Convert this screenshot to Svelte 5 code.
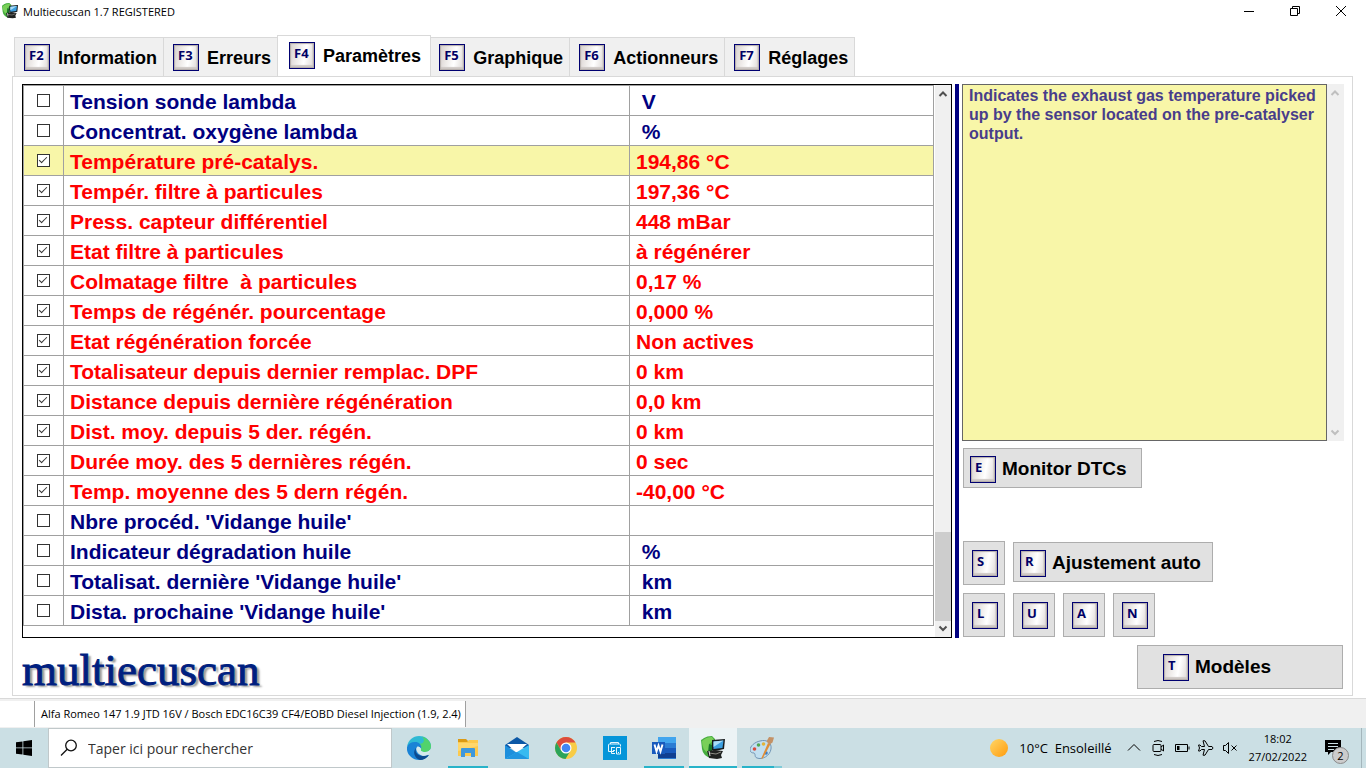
<script lang="ts">
	type Param = { name: string; value: string; checked: boolean };

	const tabs = [
		{ key: "F2", label: "Information" },
		{ key: "F3", label: "Erreurs" },
		{ key: "F4", label: "Paramètres" },
		{ key: "F5", label: "Graphique" },
		{ key: "F6", label: "Actionneurs" },
		{ key: "F7", label: "Réglages" },
	];

	let activeTab = $state("F4");
	let selected = $state(2);

	let params: Param[] = $state([
		{ name: "Tension sonde lambda", value: " V", checked: false },
		{ name: "Concentrat. oxygène lambda", value: " %", checked: false },
		{ name: "Température pré-catalys.", value: "194,86 °C", checked: true },
		{ name: "Tempér. filtre à particules", value: "197,36 °C", checked: true },
		{ name: "Press. capteur différentiel", value: "448 mBar", checked: true },
		{ name: "Etat filtre à particules", value: "à régénérer", checked: true },
		{ name: "Colmatage filtre  à particules", value: "0,17 %", checked: true },
		{ name: "Temps de régénér. pourcentage", value: "0,000 %", checked: true },
		{ name: "Etat régénération forcée", value: "Non actives", checked: true },
		{ name: "Totalisateur depuis dernier remplac. DPF", value: "0 km", checked: true },
		{ name: "Distance depuis dernière régénération", value: "0,0 km", checked: true },
		{ name: "Dist. moy. depuis 5 der. régén.", value: "0 km", checked: true },
		{ name: "Durée moy. des 5 dernières régén.", value: "0 sec", checked: true },
		{ name: "Temp. moyenne des 5 dern régén.", value: "-40,00 °C", checked: true },
		{ name: "Nbre procéd. 'Vidange huile'", value: "", checked: false },
		{ name: "Indicateur dégradation huile", value: " %", checked: false },
		{ name: "Totalisat. dernière 'Vidange huile'", value: " km", checked: false },
		{ name: "Dista. prochaine 'Vidange huile'", value: " km", checked: false },
	]);
</script>

{#snippet keycap(letter: string)}
	<span class="keycap">{letter}</span>
{/snippet}

{#snippet arrow(up: boolean)}
	<svg class="arrow" viewBox="0 0 16 16" width="16" height="16" aria-hidden="true">
		<path d={up ? "M4.5 11 8 7.5 11.5 11" : "M4.5 5.500 8 9 11.500 5.500"} />
	</svg>
{/snippet}

{#snippet appLogo(size: number)}
	<svg viewBox="0 0 24 24" width={size} height={size} aria-hidden="true">
		<path d="M0 4q2-1 3-2 3-2 8-2l3 3v6l-4 3v10q-8-2-9-9z" fill="#45ad3f" />
		<path d="M1 5q4-4 10-4l2 3-5 4-1 9Q1 14 1 5z" fill="#79cf58" />
		<path d="M8 8l3 1v12l-4-2z" fill="#187428" />
		<path d="M11 4l13-1-1 10-9 2-3-1z" fill="#15191c" />
		<path d="M12.500 5.500 22.500 4.500 21.500 12 12.500 13z" fill="#3c9fe0" />
		<path d="M12.500 5.500 22.500 4.500 12.500 11z" fill="#a9ddf7" />
		<path d="M6 15l7-1 9 1-2 4 1 3-5 1-8-1z" fill="#202221" />
		<path d="M8 17l7 1 5-2" stroke="#8d8d86" fill="none" />
		<path d="M8 15l1 5" stroke="#ddd" />
	</svg>
{/snippet}

<div class="window">
	<header class="titlebar">
		{@render appLogo(16)}
		<span class="title">Multiecuscan 1.7 REGISTERED</span>
		<div class="controls">
			<button aria-label="Réduire">
				<svg viewBox="0 0 12 12" width="12" height="12"><path d="M1 6.500h10" /></svg>
			</button>
			<button aria-label="Restaurer">
				<svg viewBox="0 0 12 12" width="12" height="12">
					<path d="M1.500 3.500h7v7h-7zM3.500 3.500v-2h7v7h-2" />
				</svg>
			</button>
			<button aria-label="Fermer">
				<svg viewBox="0 0 12 12" width="12" height="12"><path d="M1 1l10 10M11 1 1 11" /></svg>
			</button>
		</div>
	</header>

	<nav class="tabs" role="tablist">
		{#each tabs as tab}
			<button
				class="tab"
				class:active={tab.key === activeTab}
				role="tab"
				aria-selected={tab.key === activeTab}
				onclick={() => (activeTab = tab.key)}
			>
				{@render keycap(tab.key)}
				{tab.label}
			</button>
		{/each}
	</nav>

	<main class="panel">
		<div class="workspace">
			<div class="list">
				<div class="list-body">
					<table>
						<colgroup>
							<col class="col-check" />
							<col />
							<col class="col-value" />
						</colgroup>
						<tbody>
							{#each params as param, i}
								<tr
									class:checked={param.checked}
									class:selected={i === selected}
									onclick={() => (selected = i)}
								>
									<td class="check">
										<input type="checkbox" id="param-{i}" bind:checked={param.checked} />
									</td>
									<td><label for="param-{i}">{param.name}</label></td>
									<td>{param.value}</td>
								</tr>
							{/each}
						</tbody>
					</table>
				</div>
				<div class="scrollbar">
					{@render arrow(true)}
					<div class="thumb"></div>
					{@render arrow(false)}
				</div>
			</div>

			<div class="splitter"></div>

			<aside class="side">
				<div class="help">
					<p>
						Indicates the exhaust gas temperature picked up by the sensor located on the
						pre-catalyser output.
					</p>
					<div class="scrollbar disabled">
						{@render arrow(true)}
						{@render arrow(false)}
					</div>
				</div>
				<button class="action wide">{@render keycap("E")}Monitor DTCs</button>
				<div class="keys">
					<button class="action small" aria-label="S">{@render keycap("S")}</button>
					<button class="action wide auto">{@render keycap("R")}Ajustement auto</button>
				</div>
				<div class="keys last">
					{#each ["L", "U", "A", "N"] as letter}
						<button class="action small" aria-label={letter}>{@render keycap(letter)}</button>
					{/each}
				</div>
			</aside>
		</div>

		<div class="bottom">
			<div class="brand">multiecuscan</div>
			<button class="action models">{@render keycap("T")}Modèles</button>
		</div>
	</main>

	<footer class="status">
		<span class="cell empty"></span>
		<span class="cell">Alfa Romeo 147 1.9 JTD 16V / Bosch EDC16C39 CF4/EOBD Diesel Injection (1.9, 2.4)</span>
	</footer>

	<div class="taskbar">
		<button class="start" aria-label="Démarrer">
			<svg viewBox="0 0 16 16" width="16" height="16">
				<path d="M0 2.300 6.500 1.400v6.100H0zM7.300 1.300 16 0v7.500H7.300zM0 8.300h6.500v6.300L0 13.700zM7.300 8.300H16V16l-8.700-1.300z" />
			</svg>
		</button>
		<label class="search">
			<svg viewBox="0 0 18 18" width="18" height="18" aria-hidden="true">
				<circle cx="11" cy="6.500" r="5.300" />
				<path d="M7.200 10.200 1 16.500" />
			</svg>
			<input type="text" aria-label="Rechercher" placeholder="Taper ici pour rechercher" />
		</label>

		<div class="apps">
			<button class="app" aria-label="Edge">
				<svg viewBox="0 0 24 24" width="24" height="24">
					<path d="M0 11C1 4 6 0 12 0c7 0 12 5 12 10 0 4-3 6-6 6-3 0-5-1-4-3 1-3-2-6-6-6-4 0-7 2-8 4z" fill="#2fb9d4" />
					<path d="M15 0.500C20 2 24 6 24 10c0 4-3 6-6 6-3 0-5-1-4-3 1-2 0-4-2-5 4 0 7-3 3-7.500z" fill="#51d36c" />
					<path d="M0 11q2-5 8-5c5 0 7 4 6 7-1-2-3-3-4-2-2 2 0 8 6 9 3 0 5-1 6-1-2 3-6 5-10 5C5 24-1 18 0 11z" fill="#1a83d6" />
					<path d="M10 11c-3 3-1 9 6 9 3 0 5-1 6-1-2 3-6 5-9 5-6-2-8-9-3-13z" fill="#0c4a90" />
					<path d="M10 11q3-1 4 2c-1 2 1 3 4 3 2 0 4-1 5-2 0 2-1 4-3 5-2 1-5 1-7-1-3-2-4-5-3-7z" fill="#d4e9ed" />
				</svg>
			</button>
			<button class="app running" aria-label="Explorateur de fichiers">
				<svg viewBox="0 0 24 24" width="24" height="24">
					<path d="M2 3h8l2 2h10v3H2z" fill="#dc9a13" />
					<path d="M2 6h9l2-2h9v16H2z" fill="#fcc94d" />
					<path d="M2 7h20v3L2 15z" fill="#ffd76c" />
					<path d="M5 21v-8q0-1 1-1h12q1 0 1 1v8h-4v-4H9v4z" fill="#3e98dc" />
				</svg>
			</button>
			<button class="app" aria-label="Courrier">
				<svg viewBox="0 0 24 24" width="24" height="24">
					<path d="M0 9 12 1l12 8v3H0z" fill="#0c58a6" />
					<path d="M2 8h20L12 17z" fill="#fff" />
					<path d="M0 9l12 8-12 6z" fill="#1d8fdc" />
					<path d="M24 9v14H0z" fill="#37baf0" />
					<path d="M0 23l12-7 12 7z" fill="#2196e0" />
				</svg>
			</button>
			<button class="app" aria-label="Chrome">
				<svg viewBox="0 0 24 24" width="24" height="24">
					<circle cx="12" cy="12" r="11" fill="#f8cc46" />
					<path d="M2.500 6.500A11 11 0 0 1 21.500 6.500H12L7.200 14.800z" fill="#dc4c3d" />
					<path d="M2.500 6.500A11 11 0 0 0 11.500 23L16.500 14.500 12 17 7.200 14.800z" fill="#2ca45a" />
					<circle cx="12" cy="12" r="5.500" fill="#fff" />
					<circle cx="12" cy="12" r="4.300" fill="#4286f3" />
				</svg>
			</button>
			<button class="app" aria-label="Imprimante">
				<svg viewBox="0 0 24 24" width="24" height="24">
					<path d="M0 0h24v24H0z" fill="#0595d9" />
					<g fill="none" stroke="#e7f6fd">
						<path d="M7.500 8V6.500h8V8M11 15.500H5.500V9q0-1 1-1h10q1 0 1 1v1.500M8 11.500h4M8.500 11.500v6H12M10 14.500h2" />
						<path d="M13.500 11.500h4v6.500h-4zM15 16.500h1" />
					</g>
				</svg>
			</button>
			<button class="app running" aria-label="Word">
				<svg viewBox="0 0 24 24" width="24" height="24">
					<path d="M6 1h18v22H6z" fill="#2b7cd3" />
					<path d="M6 1h18v6H6z" fill="#41a5ee" />
					<path d="M6 12h18v6H6z" fill="#185abd" />
					<path d="M6 17h18v5H6z" fill="#103f91" />
					<path d="M0 6h13v12H0z" fill="#185abd" />
					<path d="M2.500 8.500l2 7 2-6 2 6 2-7" fill="none" stroke="#fff" stroke-width="1.900" />
				</svg>
			</button>
			<button class="app running current" aria-label="Multiecuscan">{@render appLogo(24)}</button>
			<button class="app running paint" aria-label="Paint">
				<svg viewBox="0 0 24 24" width="24" height="24">
					<path d="M10 5c7-2 12 2 11 8-1 7-9 11-14 9-3-1-1-4-3-5-2 0-4-1-4-3 0-4 5-8 10-9z" fill="#c2dff0" stroke="#7295b5" />
					<circle cx="4.500" cy="13" r="1.800" fill="#d94b3c" />
					<circle cx="8.500" cy="9" r="1.800" fill="#4fa854" />
					<circle cx="13.500" cy="8" r="1.800" fill="#e2b33b" />
					<circle cx="16" cy="17" r="1.800" fill="#3b7fc4" />
					<path d="M11 23 18 7l2.500 1L13 22z" fill="#e08d37" />
					<path d="M16.500 5.500 19 1l5 0.500-1.500 5-3 2z" fill="#c49165" />
				</svg>
			</button>
		</div>

		<div class="tray">
			<span class="sun"></span>
			<span class="weather">10°C&nbsp; Ensoleillé</span>
			<svg viewBox="0 0 16 16" width="16" height="16"><path d="M2 10.500 8 4.500l6 6" /></svg>
			<svg viewBox="0 0 16 16" width="16" height="16">
				<path d="M4 4.500h6q1 0 1 1v5q0 1-1 1H4q-1 0-1-1v-5q0-1 1-1zM11 7l2.500-2v6L11 9M4 1.500q4-2 8 0M4 14.500q4 2 8 0" />
			</svg>
			<svg viewBox="0 0 16 16" width="16" height="16">
				<path d="M1.500 4.500h12v7h-12zM15 6.500v3" />
				<path d="M3 6h2.500v4H3z" fill="#000" stroke="none" />
			</svg>
			<svg viewBox="0 0 16 16" width="16" height="16">
				<path d="M0.500 5h1.500l1.500 1.500h3L5 0.800h2L10.500 6.500H14q2 1.500 0 3h-3.500L7 15.200H5l1.500-5.700h-3L2 11H0.500L1.500 8z" />
			</svg>
			<svg viewBox="0 0 16 16" width="16" height="16">
				<path d="M1.500 5.500v5h2L6.500 13.500v-11L3.500 5.500zM9.500 5.500l5 5M14.500 5.500l-5 5" />
			</svg>
			<time class="clock">18:02<br />27/02/2022</time>
			<button class="notif" aria-label="Notifications">
				<svg viewBox="0 0 18 18" width="18" height="18">
					<path d="M0 0h16v12H6l-3 3v-3H0z" fill="#000" stroke="none" />
					<path d="M3 3.500h10M3 6.500h10M3 9.500h6" stroke="#cbdfe4" />
				</svg>
				<span class="badge">2</span>
			</button>
		</div>
	</div>
</div>

<style>
	:global(body) {
		background: #fff;
	}

	.window {
		display: flex;
		flex-direction: column;
		min-height: 100vh;
		font-family: "Open Sans", "Noto Sans", sans-serif;
		font-size: 11px;
		color: #000;
	}

	button {
		border: 0;
		padding: 0;
		background: none;
		color: inherit;
		font: inherit;
	}

	svg {
		display: block;
		flex: none;
	}

	.titlebar {
		display: flex;
		align-items: center;
		height: 22px;
		padding-left: 2px;
	}

	.title {
		margin-left: 5px;
	}

	.controls {
		display: flex;
		margin-left: auto;
		padding-right: 2px;
	}

	.controls button {
		display: grid;
		place-items: center;
		width: 46px;
		height: 20px;
	}

	.controls path {
		fill: none;
		stroke: #000;
	}

	.tabs {
		display: flex;
		align-items: flex-end;
		height: 41px;
		margin-top: 13px;
		padding-left: 14px;
	}

	.tab {
		display: flex;
		align-items: center;
		gap: 8px;
		box-sizing: border-box;
		height: 39px;
		padding: 1px 6px 0 9px;
		border: 1px solid #d9d9d9;
		border-width: 1px 0 0 1px;
		background: #f0f0f0;
		font: bold 18px/24px "Liberation Sans", Arial, sans-serif;
		white-space: nowrap;
	}

	.tab:last-child {
		border-right-width: 1px;
	}

	.tab.active {
		height: 42px;
		margin-bottom: -1px;
		padding: 0 9px 2px 11px;
		border-right-width: 1px;
		background: #fff;
	}

	.tab.active + .tab {
		border-left: 0;
		padding-left: 8px;
	}

	.keycap {
		flex: none;
		box-sizing: border-box;
		width: 26px;
		height: 27px;
		padding-left: 4px;
		border: 1px solid #000070;
		background: linear-gradient(100deg, #d6d0cd, #efecea 35%, #fff 60%, #dcd7d4);
		box-shadow: inset 0 0 1px 1px #b4adaa, inset 0 -3px 1px #d0cac7, inset -2px 0 1px #dad5d2;
		color: #000066;
		font: bold 13px/20px "Open Sans", "Noto Sans", sans-serif;
		text-align: left;
	}

	.panel {
		display: flex;
		flex: 1;
		flex-direction: column;
		margin: 0 13px 2px 12px;
		border: 1px solid #d9d9d9;
	}

	.workspace {
		display: flex;
		flex: 1;
		gap: 3px;
		padding: 7px 8px 0 9px;
	}

	.list {
		display: flex;
		flex: 1;
		border: 1px solid #000;
	}

	.list-body {
		flex: 1;
		padding-bottom: 11px;
	}

	table {
		width: 100%;
		border-collapse: collapse;
		table-layout: fixed;
		color: #000080;
		font: bold 21px/27px "Liberation Sans", Arial, sans-serif;
	}

	.col-check {
		width: 40px;
	}

	.col-value {
		width: 304px;
	}

	td {
		box-sizing: border-box;
		height: 30px;
		padding: 2px 6px 0;
		border: 1px solid #a0a0a0;
		white-space: pre;
	}

	tr.checked {
		color: #f00;
	}

	tr.selected {
		background: #f8f6a8;
	}

	td.check {
		padding: 0;
	}

	.check input {
		display: block;
		appearance: none;
		box-sizing: border-box;
		width: 13px;
		height: 13px;
		margin: 0 auto;
		border: 1px solid #333;
		background: #fff;
	}

	.check input:checked::after {
		content: "";
		display: block;
		width: 7px;
		height: 3px;
		margin: 2px 0 0 1px;
		border: solid #333;
		border-width: 0 0 1px 1px;
		transform: rotate(-45deg);
	}

	.scrollbar {
		display: flex;
		flex: none;
		flex-direction: column;
		justify-content: space-between;
		width: 16px;
		background: #f0f0f0;
	}

	.arrow path {
		fill: none;
		stroke: #505050;
		stroke-width: 2;
	}

	.list .scrollbar {
		margin-left: 1px;
	}

	.scrollbar.disabled {
		width: 17px;
	}

	.disabled .arrow path {
		stroke: #bfbfbf;
	}

	.thumb {
		height: 89px;
		margin-top: auto;
		background: #cdcdcd;
	}

	.splitter {
		width: 4px;
		background: #000080;
	}

	.side {
		display: flex;
		flex-direction: column;
		align-items: flex-start;
		width: 382px;
	}

	.help {
		display: flex;
		flex: 1;
		width: 100%;
	}

	.help p {
		flex: 1;
		margin: 0;
		padding: 1px 6px;
		border: 1px solid #666;
		background: #f8f6a8;
		color: #483d8b;
		font: bold 16px/19px "Liberation Sans", Arial, sans-serif;
	}

	.action {
		display: flex;
		align-items: center;
		gap: 6px;
		box-sizing: border-box;
		height: 40px;
		border: 1px solid #adadad;
		background: #e1e1e1;
		font: bold 19px "Liberation Sans", Arial, sans-serif;
		white-space: nowrap;
	}

	.action.wide {
		width: 179px;
		margin: 7px 0 0 1px;
		padding: 2px 6px 0;
	}

	.action.small {
		justify-content: center;
		width: 42px;
		height: 44px;
		padding-left: 2px;
	}

	.action.auto {
		width: 200px;
		margin: 1px 0 0;
	}

	.keys {
		display: flex;
		align-items: flex-start;
		gap: 8px;
		margin: 53px 0 0 1px;
	}

	.keys.last {
		margin: 8px 0 1px 1px;
	}

	.bottom {
		display: flex;
		align-items: center;
		justify-content: space-between;
		height: 57px;
		padding: 0 9px;
	}

	.brand {
		padding-top: 8px;
		color: #001f80;
		font: 45px/49px "Liberation Serif", serif;
		-webkit-text-stroke: 1px #001f80;
		text-shadow: 3px 2px 2px #999;
	}

	.action.models {
		width: 206px;
		height: 44px;
		padding: 1px 25px 0;
	}

	.status {
		display: flex;
		box-sizing: border-box;
		height: 30px;
		padding: 2px 0 1px;
		border-top: 1px solid #d9d9d9;
		background: #f0f0f0;
	}

	.cell {
		padding: 0 4px 0 6px;
		border-right: 1px solid #a0a0a0;
		background: #fff;
		line-height: 26px;
		white-space: nowrap;
	}

	.cell.empty {
		width: 24px;
	}

	.taskbar {
		display: flex;
		height: 40px;
		background: #cbdfe4;
	}

	.start {
		display: grid;
		place-items: center;
		width: 48px;
	}

	.search {
		display: flex;
		align-items: center;
		gap: 10px;
		box-sizing: border-box;
		width: 344px;
		padding-left: 11px;
		border: 1px solid #c0c8ca;
		background: #fff;
	}

	.search svg {
		fill: none;
		stroke: #111;
		stroke-width: 1.3;
	}

	.search input {
		flex: 1;
		min-width: 0;
		border: 0;
		outline: 0;
		padding: 0;
		background: none;
		font: 14px "Open Sans", "Noto Sans", sans-serif;
	}

	.search input::placeholder {
		color: #333;
		opacity: 1;
	}

	.apps {
		display: flex;
		gap: 1px;
		padding-left: 3px;
	}

	.app {
		display: grid;
		place-items: center;
		box-sizing: border-box;
		width: 48px;
		padding-top: 2px;
		border-bottom: 2px solid transparent;
	}

	.app.running {
		background: linear-gradient(#27b3c9, #27b3c9) center bottom / 40px 2px no-repeat border-box;
	}

	.app.current {
		background: #ecf3f5;
		border-bottom-color: #27b3c9;
	}

	.app.paint {
		background: linear-gradient(90deg, #27b3c9 32px, #7fcbd8 32px) center bottom / 40px 2px no-repeat border-box;
	}

	.tray {
		display: flex;
		align-items: center;
		gap: 8px;
		margin-left: auto;
		padding-right: 4px;
	}

	.tray svg {
		fill: none;
		stroke: #000;
	}

	.sun {
		width: 18px;
		height: 18px;
		border-radius: 50%;
		background: linear-gradient(135deg, #ffd768, #ff9b0c);
	}

	.weather {
		margin: 0 6px 0 3px;
		font-size: 13px;
	}

	.clock {
		margin-left: 3px;
		line-height: 18px;
		text-align: center;
	}

	.notif {
		position: relative;
		display: flex;
		box-sizing: border-box;
		width: 47px;
		height: 40px;
		padding: 12px 0 0 10px;
		border-right: 1px solid #a4b6bc;
	}

	.badge {
		position: absolute;
		right: 12px;
		bottom: 4px;
		box-sizing: border-box;
		width: 17px;
		height: 17px;
		border: 1px solid #8a8a8a;
		border-radius: 50%;
		background: #ccc;
		font-size: 11px;
		line-height: 15px;
		text-align: center;
	}
</style>
